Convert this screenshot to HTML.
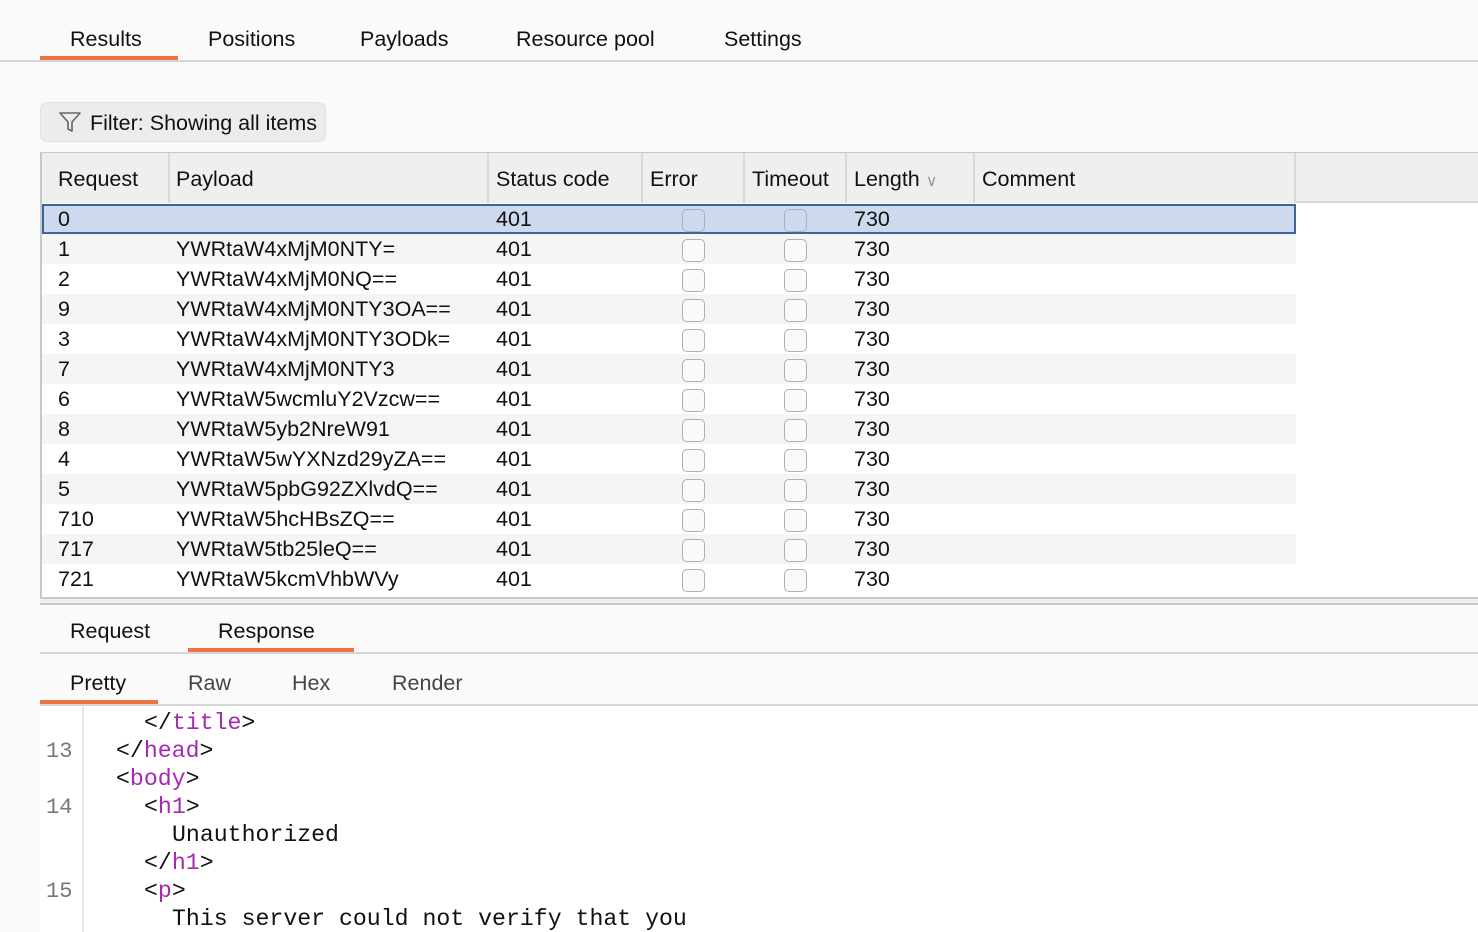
<!DOCTYPE html>
<html><head><style>
*{margin:0;padding:0;box-sizing:border-box}
body{width:1478px;height:932px;overflow:hidden;background:#fafafa;font-family:"Liberation Sans",Arial,sans-serif;color:#111;position:relative}
.abs{position:absolute}
.tab{position:absolute;font-size:21.5px;white-space:nowrap}
.ul{position:absolute;height:4px;background:#ee7244}
.hl{position:absolute;height:2px;background:#d4d6d6}
table{border-collapse:collapse;position:absolute;left:42px;top:204px;font-size:21.5px}
td{height:30px;padding:1px 0 0 16px;white-space:nowrap;vertical-align:middle}
#t2 tr:nth-child(odd) td{background:#f5f5f5}
#t2 tr:nth-child(even) td{background:#fff}
.cb{display:inline-block;width:23px;height:23px;border:1.5px solid #b0b0b0;border-radius:5px;background:#fafafa;vertical-align:middle}
.hd{position:absolute;top:153px;height:50px;font-size:21.5px;line-height:52px;padding-left:16px;border-right:2px solid #d9d9d9;background:#efefef}
.code{position:absolute;font-family:"Liberation Mono",monospace;font-size:23.2px;white-space:pre;color:#111}
.k{color:#a52ab3}
.ln{position:absolute;left:46px;font-family:"Liberation Mono",monospace;font-size:22px;color:#777}
</style></head><body>
<div class="tab" style="left:70px;top:27px">Results</div>
<div class="tab" style="left:208px;top:27px">Positions</div>
<div class="tab" style="left:360px;top:27px">Payloads</div>
<div class="tab" style="left:516px;top:27px">Resource pool</div>
<div class="tab" style="left:724px;top:27px">Settings</div>
<div class="hl" style="left:0;top:60px;width:1478px"></div>
<div class="ul" style="left:40px;top:56px;width:138px"></div>

<div class="abs" style="left:40px;top:102px;width:286px;height:40px;background:#ececec;border-radius:7px;border:1px solid #e2e2e2"></div>
<svg class="abs" style="left:58px;top:111px" width="24" height="22" viewBox="0 0 24 22"><path d="M2 2H22L14 11V20L10 18V11Z" fill="none" stroke="#666" stroke-width="1.6" stroke-linejoin="round"/></svg>
<div class="tab" style="left:90px;top:111px">Filter: Showing all items</div>

<div class="abs" style="left:40px;top:152px;width:1438px;height:452px;background:#fff;border:2px solid #c8c8c8;border-right:none"></div>
<div class="abs" style="left:42px;top:153px;width:1436px;height:50px;background:#efefef;border-bottom:2px solid #d9d9d9"></div>
<div class="hd" style="left:42px;width:128px">Request</div>
<div class="hd" style="left:170px;width:319px;padding-left:6px">Payload</div>
<div class="hd" style="left:489px;width:154px;padding-left:7px">Status code</div>
<div class="hd" style="left:643px;width:102px;padding-left:7px">Error</div>
<div class="hd" style="left:745px;width:102px;padding-left:7px">Timeout</div>
<div class="hd" style="left:847px;width:128px;padding-left:7px">Length <span style="color:#999;font-size:16px">&#8744;</span></div>
<div class="hd" style="left:975px;width:321px;padding-left:7px">Comment</div>

<table>
<colgroup><col style="width:128px"><col style="width:319px"><col style="width:154px"><col style="width:102px"><col style="width:102px"><col style="width:128px"><col style="width:321px"></colgroup>
<tr><td style="background:#cdd9ec">0</td><td style="background:#cdd9ec"></td><td style="background:#cdd9ec;padding-left:7px">401</td><td style="background:#cdd9ec;padding-left:39px"><span class="cb" style="background:#cdd9ec"></span></td><td style="background:#cdd9ec;padding-left:39px"><span class="cb" style="background:#cdd9ec"></span></td><td style="background:#cdd9ec;padding-left:7px">730</td><td style="background:#cdd9ec"></td></tr>
</table>
<div class="abs" style="left:42px;top:204px;width:1254px;height:30px;border:2px solid #3d6597"></div>
<table style="top:234px" id="t2">
<colgroup><col style="width:128px"><col style="width:319px"><col style="width:154px"><col style="width:102px"><col style="width:102px"><col style="width:128px"><col style="width:321px"></colgroup>
<tr><td>1</td><td style="padding-left:6px">YWRtaW4xMjM0NTY=</td><td style="padding-left:7px">401</td><td style="padding-left:39px"><span class="cb"></span></td><td style="padding-left:39px"><span class="cb"></span></td><td style="padding-left:7px">730</td><td></td></tr>
<tr><td>2</td><td style="padding-left:6px">YWRtaW4xMjM0NQ==</td><td style="padding-left:7px">401</td><td style="padding-left:39px"><span class="cb"></span></td><td style="padding-left:39px"><span class="cb"></span></td><td style="padding-left:7px">730</td><td></td></tr>
<tr><td>9</td><td style="padding-left:6px">YWRtaW4xMjM0NTY3OA==</td><td style="padding-left:7px">401</td><td style="padding-left:39px"><span class="cb"></span></td><td style="padding-left:39px"><span class="cb"></span></td><td style="padding-left:7px">730</td><td></td></tr>
<tr><td>3</td><td style="padding-left:6px">YWRtaW4xMjM0NTY3ODk=</td><td style="padding-left:7px">401</td><td style="padding-left:39px"><span class="cb"></span></td><td style="padding-left:39px"><span class="cb"></span></td><td style="padding-left:7px">730</td><td></td></tr>
<tr><td>7</td><td style="padding-left:6px">YWRtaW4xMjM0NTY3</td><td style="padding-left:7px">401</td><td style="padding-left:39px"><span class="cb"></span></td><td style="padding-left:39px"><span class="cb"></span></td><td style="padding-left:7px">730</td><td></td></tr>
<tr><td>6</td><td style="padding-left:6px">YWRtaW5wcmluY2Vzcw==</td><td style="padding-left:7px">401</td><td style="padding-left:39px"><span class="cb"></span></td><td style="padding-left:39px"><span class="cb"></span></td><td style="padding-left:7px">730</td><td></td></tr>
<tr><td>8</td><td style="padding-left:6px">YWRtaW5yb2NreW91</td><td style="padding-left:7px">401</td><td style="padding-left:39px"><span class="cb"></span></td><td style="padding-left:39px"><span class="cb"></span></td><td style="padding-left:7px">730</td><td></td></tr>
<tr><td>4</td><td style="padding-left:6px">YWRtaW5wYXNzd29yZA==</td><td style="padding-left:7px">401</td><td style="padding-left:39px"><span class="cb"></span></td><td style="padding-left:39px"><span class="cb"></span></td><td style="padding-left:7px">730</td><td></td></tr>
<tr><td>5</td><td style="padding-left:6px">YWRtaW5pbG92ZXlvdQ==</td><td style="padding-left:7px">401</td><td style="padding-left:39px"><span class="cb"></span></td><td style="padding-left:39px"><span class="cb"></span></td><td style="padding-left:7px">730</td><td></td></tr>
<tr><td>710</td><td style="padding-left:6px">YWRtaW5hcHBsZQ==</td><td style="padding-left:7px">401</td><td style="padding-left:39px"><span class="cb"></span></td><td style="padding-left:39px"><span class="cb"></span></td><td style="padding-left:7px">730</td><td></td></tr>
<tr><td>717</td><td style="padding-left:6px">YWRtaW5tb25leQ==</td><td style="padding-left:7px">401</td><td style="padding-left:39px"><span class="cb"></span></td><td style="padding-left:39px"><span class="cb"></span></td><td style="padding-left:7px">730</td><td></td></tr>
<tr><td>721</td><td style="padding-left:6px">YWRtaW5kcmVhbWVy</td><td style="padding-left:7px">401</td><td style="padding-left:39px"><span class="cb"></span></td><td style="padding-left:39px"><span class="cb"></span></td><td style="padding-left:7px">730</td><td></td></tr>
</table>
<div class="abs" style="left:40px;top:597px;width:1438px;height:2px;background:#c8c8c8"></div>
<div class="abs" style="left:40px;top:599px;width:1438px;height:4px;background:#f0f0f0"></div>
<div class="abs" style="left:40px;top:603px;width:1438px;height:2px;background:#c8c8c8"></div>

<div class="tab" style="left:70px;top:619px">Request</div>
<div class="tab" style="left:218px;top:619px">Response</div>
<div class="hl" style="left:40px;top:652px;width:1438px"></div>
<div class="ul" style="left:188px;top:648px;width:166px"></div>
<div class="tab" style="left:70px;top:671px">Pretty</div>
<div class="tab" style="left:188px;top:671px;color:#444">Raw</div>
<div class="tab" style="left:292px;top:671px;color:#444">Hex</div>
<div class="tab" style="left:392px;top:671px;color:#444">Render</div>
<div class="hl" style="left:40px;top:704px;width:1438px"></div>
<div class="ul" style="left:40px;top:700px;width:118px"></div>

<div class="abs" style="left:40px;top:706px;width:1438px;height:226px;background:#fff"></div>
<div class="abs" style="left:82px;top:706px;width:2px;height:226px;background:#e6e6e6"></div>
<div class="ln" style="top:739px">13</div>
<div class="ln" style="top:795px">14</div>
<div class="ln" style="top:879px">15</div>
<div class="code" style="left:144px;top:710px">&lt;/<span class="k">title</span>&gt;</div>
<div class="code" style="left:116px;top:738px">&lt;/<span class="k">head</span>&gt;</div>
<div class="code" style="left:116px;top:766px">&lt;<span class="k">body</span>&gt;</div>
<div class="code" style="left:144px;top:794px">&lt;<span class="k">h1</span>&gt;</div>
<div class="code" style="left:172px;top:822px">Unauthorized</div>
<div class="code" style="left:144px;top:850px">&lt;/<span class="k">h1</span>&gt;</div>
<div class="code" style="left:144px;top:878px">&lt;<span class="k">p</span>&gt;</div>
<div class="code" style="left:172px;top:906px">This server could not verify that you</div>
</body></html>
